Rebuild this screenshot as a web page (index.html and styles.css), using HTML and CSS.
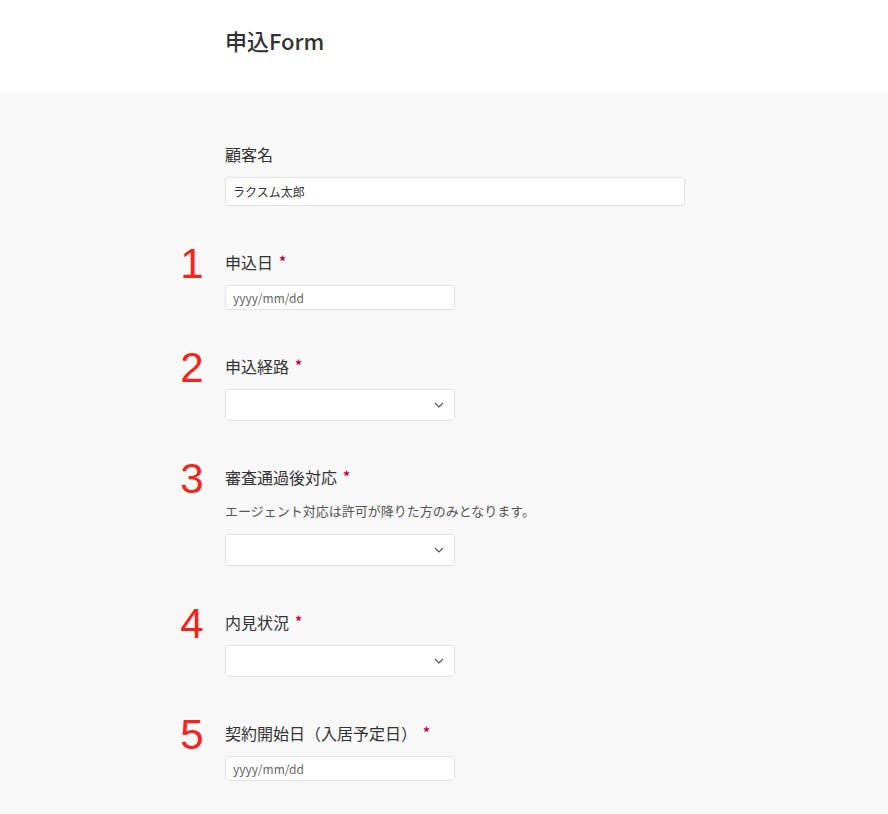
FILE: index.html
```html
<!DOCTYPE html>
<html lang="ja">
<head>
  <meta charset="UTF-8" />
  <meta name="viewport" content="width=device-width, initial-scale=1.0" />
  <title>申込Form</title>
  <link rel="stylesheet" href="styles.css">
</head>
<body>
  <header class="page-header">
    <h1>申込Form</h1>
  </header>

  <main class="form-area">
    <!-- 顧客名 -->
    <div class="row">
      <div class="num"></div>
      <div class="field">
        <label class="label">顧客名</label>
        <input class="text-input wide" type="text" value="ラクスム太郎" />
      </div>
    </div>

    <div class="row">
      <div class="num">1</div>
      <div class="field">
        <label class="label">申込日<span class="req">*</span></label>
        <input class="text-input date" type="text" placeholder="yyyy/mm/dd" />
      </div>
    </div>

    <div class="row">
      <div class="num">2</div>
      <div class="field">
        <label class="label">申込経路<span class="req">*</span></label>
        <div class="select">
          <svg class="chevron" width="10" height="6" viewBox="0 0 10 6"><path d="M1 1l4 4 4-4" fill="none" stroke="#555" stroke-width="1.2"/></svg>
        </div>
      </div>
    </div>

    <div class="row">
      <div class="num">3</div>
      <div class="field">
        <label class="label">審査通過後対応<span class="req">*</span></label>
        <p class="help">エージェント対応は許可が降りた方のみとなります。</p>
        <div class="select">
          <svg class="chevron" width="10" height="6" viewBox="0 0 10 6"><path d="M1 1l4 4 4-4" fill="none" stroke="#555" stroke-width="1.2"/></svg>
        </div>
      </div>
    </div>

    <div class="row">
      <div class="num">4</div>
      <div class="field">
        <label class="label">内見状況<span class="req">*</span></label>
        <div class="select">
          <svg class="chevron" width="10" height="6" viewBox="0 0 10 6"><path d="M1 1l4 4 4-4" fill="none" stroke="#555" stroke-width="1.2"/></svg>
        </div>
      </div>
    </div>

    <div class="row">
      <div class="num">5</div>
      <div class="field">
        <label class="label">契約開始日（入居予定日）<span class="req">*</span></label>
        <input class="text-input date" type="text" placeholder="yyyy/mm/dd" />
      </div>
    </div>
  </main>
</body>
</html>
```

FILE: styles.css
```css
body {
  margin: 0;
  font-family: "Noto Sans CJK JP", "Noto Sans", sans-serif;
  color: #333333;
  background-color: #f8f8f8;
}

.page-header {
  background-color: #ffffff;
  height: 92px;
  padding-left: 225px;
  display: flex;
  align-items: center;
}

.page-header h1 {
  margin: 0 0 12px 0;
  font-size: 22px;
  font-weight: 500;
  color: #333333;
}

.form-area {
  padding-top: 50px;
  padding-bottom: 40px;
}

.row {
  display: grid;
  grid-template-columns: 225px 460px;
  margin-bottom: 43px;
}

.num {
  font-family: "Liberation Sans", Arial, sans-serif;
  font-size: 42px;
  line-height: 40px;
  color: #f5231b;
  text-align: center;
  padding-right: 18px;
  justify-self: end;
  width: 30px;
  margin-top: -5px;
}

.field {
  display: flex;
  flex-direction: column;
  align-items: flex-start;
}

.label {
  font-size: 16px;
  line-height: 24px;
  margin-bottom: 11px;
  color: #333333;
}

.req {
  color: #c8004b;
  font-size: 14px;
  font-weight: bold;
  margin-left: 6px;
  vertical-align: 2px;
}

.help {
  margin: 0 0 12px 0;
  font-size: 13px;
  line-height: 22px;
  color: #555555;
}

.text-input {
  box-sizing: border-box;
  font-family: "Noto Sans CJK JP", sans-serif;
  font-size: 12px;
  color: #333333;
  background-color: #ffffff;
  border: 1px solid #e2e2e2;
  border-radius: 3px;
  padding: 0 7px;
  margin: 0;
  outline: none;
}

.text-input::placeholder {
  color: #666666;
}

.wide {
  width: 460px;
  height: 29px;
}

.date {
  width: 230px;
  height: 25px;
}

.select {
  box-sizing: border-box;
  width: 230px;
  height: 32px;
  background-color: #ffffff;
  border: 1px solid #e2e2e2;
  border-radius: 3px;
  display: flex;
  align-items: center;
  justify-content: flex-end;
  padding-right: 10px;
}
```
